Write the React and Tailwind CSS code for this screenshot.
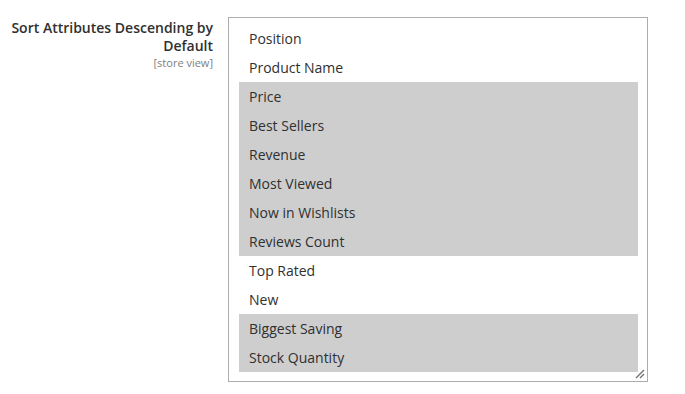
import React from "react";

const options = [
  { label: "Position", selected: false },
  { label: "Product Name", selected: false },
  { label: "Price", selected: true },
  { label: "Best Sellers", selected: true },
  { label: "Revenue", selected: true },
  { label: "Most Viewed", selected: true },
  { label: "Now in Wishlists", selected: true },
  { label: "Reviews Count", selected: true },
  { label: "Top Rated", selected: false },
  { label: "New", selected: false },
  { label: "Biggest Saving", selected: true },
  { label: "Stock Quantity", selected: true },
];

export default function App() {
  return (
    <div
      className="w-[685px] h-[394px] bg-white text-[#303030]"
      style={{ fontFamily: '"Open Sans", "Liberation Sans", sans-serif' }}
    >
      <div className="flex items-start pt-[17px]">
        {/* Field label */}
        <div className="w-[213px] flex flex-col items-end text-right pt-[2px]">
          <span className="text-[14px] leading-[18px] font-semibold">
            Sort Attributes Descending by Default
          </span>
          <span className="text-[11px] leading-[14px] text-[#808080] mt-[1px]">
            [store view]
          </span>
        </div>

        {/* Multiselect box */}
        <div className="relative ml-[15px] w-[420px] h-[365px] border border-[#adadad] pt-[6px] pl-[10px] pr-[9px]">
          {options.map((o) => (
            <div
              key={o.label}
              className={`h-[29px] flex items-center pl-[10px] text-[14px] ${
                o.selected ? "bg-[#cecece]" : ""
              }`}
            >
              {o.label}
            </div>
          ))}
          <svg
            className="absolute right-[2px] bottom-[2px]"
            width="10"
            height="10"
            viewBox="0 0 10 10"
          >
            <path d="M1 9L9 1M5 9L9 5" stroke="#6f6f6f" strokeWidth="1.3" />
          </svg>
        </div>
      </div>
    </div>
  );
}
